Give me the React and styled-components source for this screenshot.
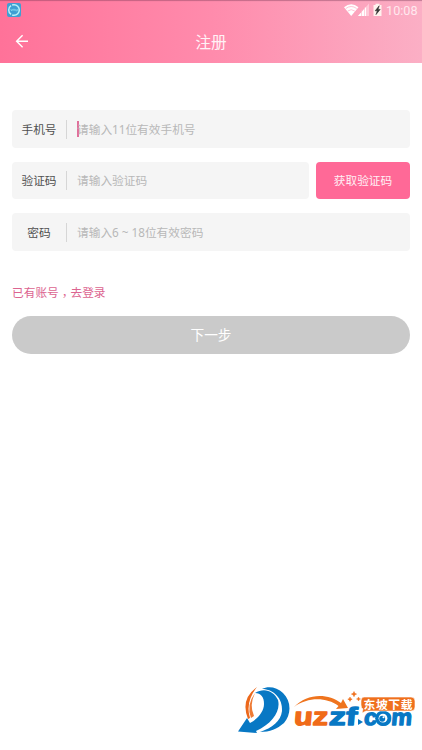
import React from "react";
import styled, { createGlobalStyle } from "styled-components";

const GlobalStyle = createGlobalStyle`
  * { box-sizing: border-box; }
  body { margin: 0; background: #fff; }
  button, input { font: inherit; border: 0; padding: 0; }
`;

const Screen = styled.div`
  position: relative;
  display: flex;
  flex-direction: column;
  height: 750px;
  overflow: hidden;
  background: #fff;
  font-family: "Noto Sans", "Noto Sans CJK SC", sans-serif;
  font-size: 11.7px;
`;

const Header = styled.header`
  height: 63px;
  flex: none;
  background: linear-gradient(90deg, #ff7299 0%, #ff8bac 50%, #fbafc5 100%);
  color: #fff;
  box-shadow: inset 0 2px 1px -1px rgba(110, 50, 80, 0.4);
`;

const StatusBar = styled.div`
  display: flex;
  justify-content: space-between;
  height: 20px;
  padding: 3px 4px 0 7px;
`;

const StatusIcons = styled.div`
  display: flex;
  align-items: flex-start;
`;

const Clock = styled.span`
  width: 32px;
  margin-left: 3px;
  font: 12.7px/15px Roboto, sans-serif;
  color: #ffe8ef;
  white-space: nowrap;
`;

const TitleBar = styled.div`
  display: grid;
  grid-template-columns: 44px 1fr 44px;
  align-items: center;
  height: 43px;
`;

const BackButton = styled.button`
  display: flex;
  width: 44px;
  padding: 0 0 2px 15px;
  background: none;
  color: inherit;
`;

const Title = styled.h1`
  margin: 0;
  font-size: 15.6px;
  line-height: 22px;
  font-weight: 400;
  text-align: center;
  color: #fff2f6;
`;

const Form = styled.form`
  display: flex;
  flex-direction: column;
  padding: 47px 12px 0;
`;

const Row = styled.div`
  display: flex;
  gap: 7px;
  height: ${(p) => p.$height}px;
  margin-bottom: 14px;
`;

const Field = styled.label`
  flex: 1;
  display: flex;
  align-items: center;
  min-width: 0;
  border-radius: 4px;
  background: #f5f5f5;
`;

const Label = styled.span`
  width: 54px;
  padding-bottom: 1px;
  text-align: center;
  line-height: 18px;
  color: #505050;
`;

const Divider = styled.i`
  width: 1px;
  height: 19px;
  background: #d6d6d6;
`;

const Caret = styled.i`
  width: 2px;
  height: 16px;
  margin: 0 -2px 0 10px;
  background: #e0709a;
  visibility: ${(p) => (p.$active ? "visible" : "hidden")};
`;

const Input = styled.input`
  flex: 1;
  min-width: 0;
  height: 20px;
  padding-bottom: 1px;
  background: none;
  outline: none;
  &::placeholder { color: #b8b8b8; opacity: 1; }
`;

const CodeButton = styled.button`
  width: 94px;
  padding-bottom: 2px;
  border-radius: 4px;
  background: #ff6997;
  color: #fff0f5;
`;

const LoginLink = styled.a`
  align-self: flex-start;
  margin-top: 17px;
  line-height: 20px;
  color: #dc6490;
`;

const Comma = styled.span`
  display: inline-block;
  font-family: "Noto Sans CJK TC", sans-serif;
  transform: translateY(3px);
`;

const NextButton = styled.button`
  height: 37.5px;
  margin-top: 14px;
  padding-bottom: 1px;
  border-radius: 19px;
  background: #cacaca;
  color: #fff;
  && { font-size: 13.7px; }
`;

const Watermark = styled.svg`
  position: absolute;
  right: 0;
  bottom: 6px;
`;

function AppBadge() {
  return (
    <svg width="14" height="14" viewBox="0 0 14 14" fill="none">
      <rect width="14" height="14" rx="2" fill="#3f9fd3" />
      <circle cx="7" cy="7" r="5.3" stroke="#b9f0f8" strokeWidth="1.5" strokeDasharray="10 1.2" />
      <path d="M3.7 6l1 2 .8-2M6.2 7.8V6.3h1.5v1.5M8.8 6v1.8h1.5V6" stroke="#8bdcf0" strokeWidth=".7" />
    </svg>
  );
}

function SignalIcons() {
  return (
    <svg width="42" height="14" viewBox="0 0 42 14">
      <path d="M3 4.3Q10.2-1.9 17.5 4.3L10.2 13Z" fill="#fff" />
      <path d="M4.8 5.5Q10.2 1.5 15.7 5.5M6.7 8Q10.2 5.4 13.8 8" fill="none" stroke="#ff9db9" strokeWidth=".6" />
      <path d="M28 .5V13H17Z" fill="#ffc9d8" />
      <path d="M25 4V13H17Z" fill="#fff" />
      <path d="M20.5 7v6M23.5 4v9" stroke="#ffb3c8" strokeWidth=".6" />
      <path d="M34.5.8h4V2h2v11h-8V2h2Z" fill="#fff2ee" />
      <path d="M38.2 2.8l-4 5h2.1l-1.3 3.8 4.2-5.2h-2.2Z" fill="#333" stroke="#333" strokeWidth=".6" />
    </svg>
  );
}

function BackArrow() {
  return (
    <svg width="14" height="14" viewBox="0 0 14 14" fill="none" stroke="#fff" strokeWidth="1.4">
      <path d="M13 7.2H1.8M7.6 1.2l-6 6 6 6" />
    </svg>
  );
}

function SiteMark() {
  return (
    <Watermark width="186" height="60" viewBox="236 684 186 60">
      <path d="M257 687Q240 699 248 719L250 718Q245 702 257 687Z" fill="#ec681b" />
      <path d="M255 693Q246 705 251 718L254 716Q249 705 255 693Z" fill="#ee7b35" />
      <path d="M255 693C264 687 274 691 278 700C281 711 272 724 256 731L257 733 238 731.5 247 718 250 723C258 719 264 711 264 704C264 697 261 693 255 693Z" fill="#0878c4" />
      <path d="M262 689C268 686 277 687 283 693C292 702 291 715 284 723C277 729 270 732 260 732C272 728 281 721 282 711C283 698 273 689 262 689Z" fill="#0878c4" />
      <path d="M294 707C307 693 328 693 341 703L343 699 348 708 336 709 338.5 706C326 697 308 697 294 707Z" fill="#ef741e" />
      <g fontFamily="Liberation Sans, sans-serif" fontWeight="700" strokeWidth="1.3" strokeLinejoin="round">
        <g transform="translate(293.5 724.5) skewX(-5)">
          <text x="0" y="0" fontSize="25" textLength="34" lengthAdjust="spacingAndGlyphs" fill="#f06b19" stroke="#f06b19">uz</text>
          <text x="35" y="0" fontSize="25" textLength="28" lengthAdjust="spacingAndGlyphs" fill="#0878c4" stroke="#0878c4">zf</text>
          <text x="70" y="0" fontSize="23" textLength="48" lengthAdjust="spacingAndGlyphs" fill="#0878c4" stroke="#0878c4">com</text>
        </g>
      </g>
      <path d="M358 719l5 3-5 3Z" fill="#0878c4" />
      <circle cx="383" cy="718.2" r="7.8" fill="#0878c4" />
      <circle cx="383" cy="718.2" r="4.4" fill="#fff" />
      <circle cx="382.2" cy="718.8" r="3" fill="#0878c4" />
      <circle cx="383.5" cy="717.2" r="1" fill="#fff" />
      <path d="M364 697h47q4 0 4 4v6q0 4-4 4h-45l-4 2 1-4q-2-1-2-4v-4q0-4 3-4Z" fill="#ef701d" stroke="#fff" strokeWidth=".6" />
      <text x="363.5" y="708.6" fontFamily="Noto Sans CJK SC, sans-serif" fontWeight="700" fontSize="11.8" textLength="49" fill="#fff">东坡下载</text>
      <path d="M354 691.5l.8 1.8 1.8.8-1.8.8-.8 1.8-.8-1.8-1.8-.8 1.8-.8ZM350 697l.7 1.5 1.5.7-1.5.7-.7 1.5-.7-1.5-1.5-.7 1.5-.7ZM358.5 697l.6 1.4 1.4.6-1.4.6-.6 1.4-.6-1.4-1.4-.6 1.4-.6Z" fill="#ef701d" stroke="#ef701d" strokeWidth=".5" />
    </Watermark>
  );
}

function FormField({ label, hint, active }) {
  return (
    <Field>
      <Label>{label}</Label>
      <Divider />
      <Caret $active={active} />
      <Input placeholder={hint} />
    </Field>
  );
}

export default function App() {
  return (
    <Screen>
      <GlobalStyle />
      <Header>
        <StatusBar>
          <AppBadge />
          <StatusIcons>
            <SignalIcons />
            <Clock>10:08</Clock>
          </StatusIcons>
        </StatusBar>
        <TitleBar>
          <BackButton type="button" aria-label="返回"><BackArrow /></BackButton>
          <Title>注册</Title>
        </TitleBar>
      </Header>
      <Form>
        <Row $height={38}>
          <FormField label="手机号" hint="请输入11位有效手机号" active />
        </Row>
        <Row $height={37}>
          <FormField label="验证码" hint="请输入验证码" />
          <CodeButton type="button">获取验证码</CodeButton>
        </Row>
        <Row $height={38}>
          <FormField label="密码" hint="请输入6 ~ 18位有效密码" />
        </Row>
        <LoginLink>已有账号<Comma lang="zh-TW">，</Comma>去登录</LoginLink>
        <NextButton type="button">下一步</NextButton>
      </Form>
      <SiteMark />
    </Screen>
  );
}
